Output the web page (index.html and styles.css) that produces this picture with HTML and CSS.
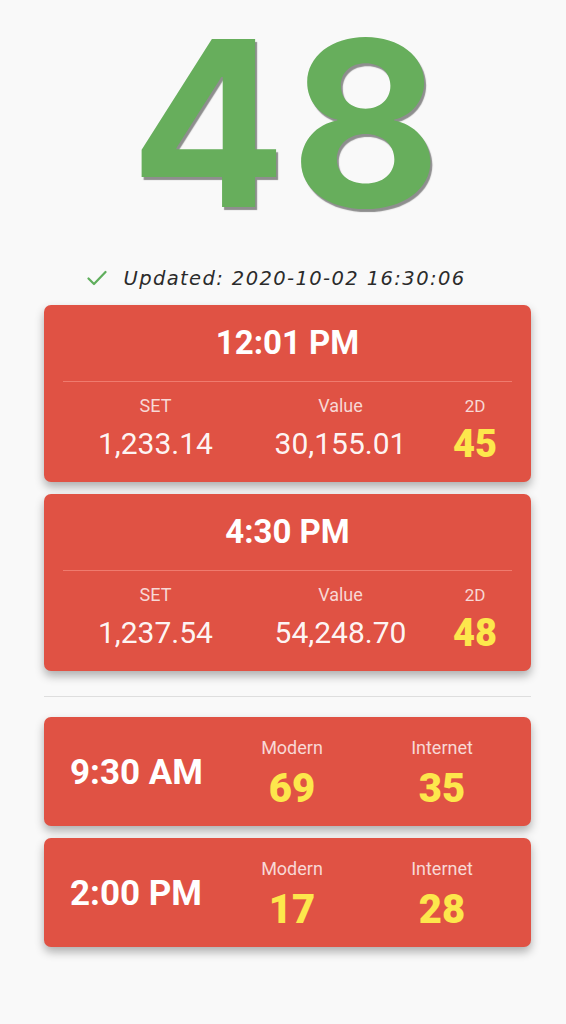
FILE: index.html
```html
<!DOCTYPE html>
<html lang="en">
<head>
<meta charset="utf-8">
<title>2D Live</title>
<link rel="stylesheet" href="styles.css">
</head>
<body>
<main class="screen">
  <div class="hero">48</div>
  <div class="updated">
    <svg class="check" width="20" height="16" viewBox="0 0 20 16" aria-hidden="true"><polyline points="1.5,8.5 7,14 18.5,2" fill="none" stroke="#5fae5c" stroke-width="2.2" stroke-linecap="round" stroke-linejoin="round"/></svg>
    <span class="updated-text">Updated: 2020-10-02 16:30:06</span>
  </div>

  <section class="cards">
    <article class="card result">
      <div class="result-time">12:01 PM</div>
      <div class="divider"></div>
      <div class="stats">
        <div class="stat"><span class="label">SET</span><span class="value">1,233.14</span></div>
        <div class="stat"><span class="label">Value</span><span class="value">30,155.01</span></div>
        <div class="stat stat-2d"><span class="label">2D</span><span class="num">45</span></div>
      </div>
    </article>
    <article class="card result">
      <div class="result-time">4:30 PM</div>
      <div class="divider"></div>
      <div class="stats">
        <div class="stat"><span class="label">SET</span><span class="value">1,237.54</span></div>
        <div class="stat"><span class="label">Value</span><span class="value">54,248.70</span></div>
        <div class="stat stat-2d"><span class="label">2D</span><span class="num">48</span></div>
      </div>
    </article>
  </section>

  <div class="sep"></div>

  <section class="cards">
    <article class="card session">
      <div class="session-time">9:30 AM</div>
      <div class="stat"><span class="label">Modern</span><span class="num">69</span></div>
      <div class="stat"><span class="label">Internet</span><span class="num">35</span></div>
    </article>
    <article class="card session">
      <div class="session-time">2:00 PM</div>
      <div class="stat"><span class="label">Modern</span><span class="num">17</span></div>
      <div class="stat"><span class="label">Internet</span><span class="num">28</span></div>
    </article>
  </section>
</main>
</body>
</html>
```

FILE: styles.css
```css
* { box-sizing: border-box; }

html, body {
  margin: 0;
  padding: 0;
  background: #f9f9f9;
}

body {
  font-family: Roboto, "Liberation Sans", sans-serif;
  width: 566px;
  height: 1024px;
  overflow: hidden;
}

.screen {
  display: flex;
  flex-direction: column;
  padding: 8px 35px 0 44px;
}

.hero {
  font-family: Inter, "Liberation Sans", sans-serif;
  font-weight: 700;
  font-size: 231px;
  line-height: 231px;
  height: 231px;
  text-align: center;
  color: #67ae5c;
  text-shadow: 2px 3px 1px rgba(70, 70, 70, 0.6);
  letter-spacing: 4px;
}

.updated {
  margin-top: 24px;
  height: 30px;
  display: flex;
  align-items: center;
  justify-content: center;
  gap: 16px;
  padding-right: 22px;
}

.check { flex: none; }

.updated-text {
  font-family: "DejaVu Sans", sans-serif;
  font-style: italic;
  font-size: 19.5px;
  color: #2b2b2b;
  letter-spacing: 1.4px;
}

.cards {
  display: flex;
  flex-direction: column;
  gap: 12px;
}

.updated + .cards { margin-top: 12px; }

.card {
  background: #e05244;
  border-radius: 7px;
  box-shadow: 0 5px 10px rgba(0, 0, 0, 0.3);
  color: #fff;
}

.result {
  height: 177px;
  padding: 18px 19px 0;
  display: flex;
  flex-direction: column;
}

.result-time {
  font-weight: bold;
  font-size: 33px;
  line-height: 40px;
  text-align: center;
}

.divider {
  margin-top: 18px;
  height: 1px;
  background: #ef7b6e;
}

.stats {
  display: flex;
  padding: 13px 12px 0 0;
}

.stat {
  display: flex;
  flex-direction: column;
  align-items: center;
}

.stats .stat { flex: 0 0 185px; }
.stats .stat-2d { flex: 1; margin-left: 17px; }

.label {
  font-size: 18px;
  line-height: 22px;
  color: rgba(255, 255, 255, 0.78);
}

.stat-2d .label { font-size: 17px; }

.value {
  margin-top: 7px;
  font-size: 30px;
  line-height: 40px;
  color: rgba(255, 255, 255, 0.96);
}

.num {
  margin-top: 7px;
  font-weight: 900;
  font-size: 38px;
  line-height: 40px;
  color: #fde74c;
}

.sep {
  margin: 25px 0 20px;
  height: 1px;
  background: #dedede;
}

.session {
  height: 109px;
  display: grid;
  grid-template-columns: 1fr 150px 150px;
  align-items: start;
  padding: 20px 14px 0 26px;
}

.session-time {
  align-self: center;
  margin-top: -17px;
  font-weight: bold;
  font-size: 35px;
  line-height: 40px;
}

.session .num {
  font-size: 40px;
  line-height: 44px;
  margin-top: 8px;
}
```
